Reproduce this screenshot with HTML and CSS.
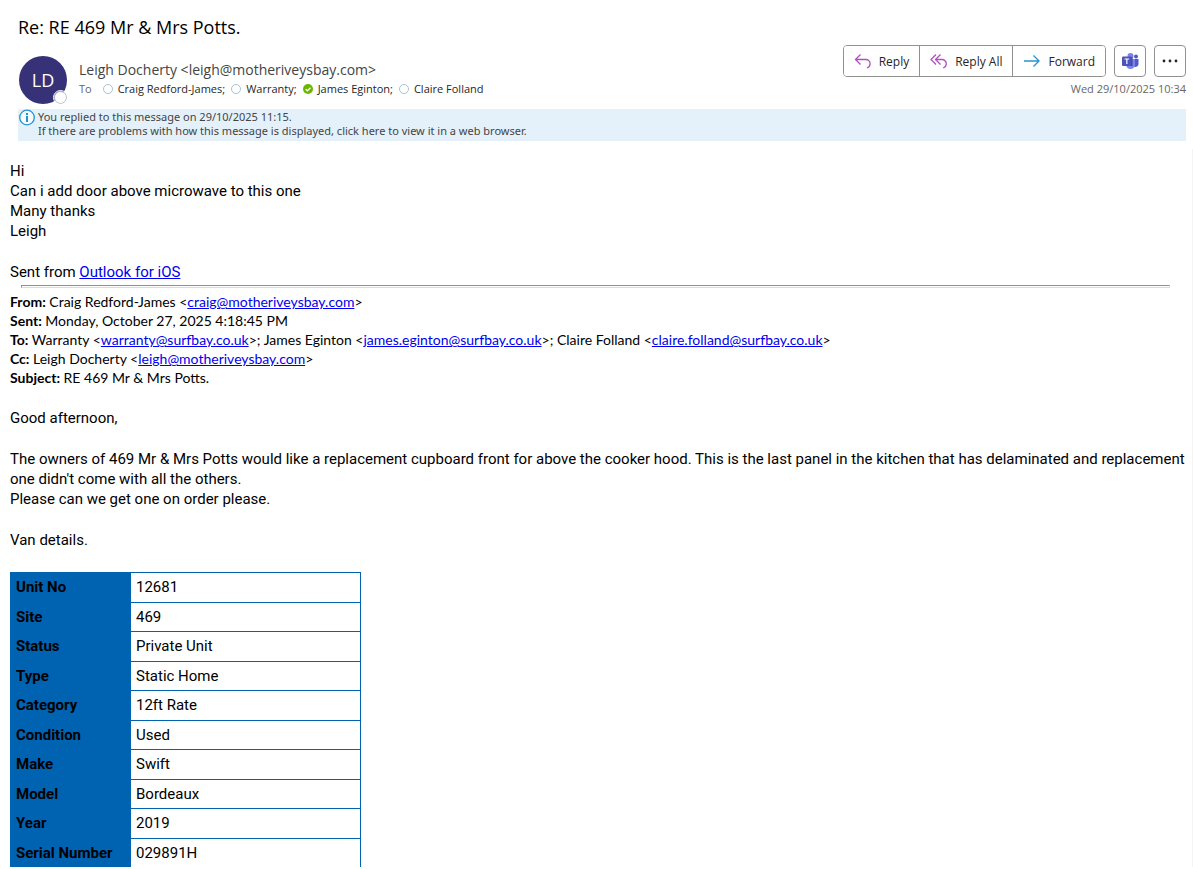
FILE: index.html
```html
<!DOCTYPE html>
<html lang="en">
<head>
<meta charset="utf-8">
<title>Re: RE 469 Mr &amp; Mrs Potts.</title>
<link rel="stylesheet" href="styles.css">
</head>
<body>
<header class="header">
  <h1 class="subject">Re: RE 469 Mr &amp; Mrs Potts.</h1>
  <div class="meta">
    <div class="avatar">LD<span class="presence"></span></div>
    <div class="people">
      <div class="sender">Leigh Docherty &lt;leigh@motheriveysbay.com&gt;</div>
      <div class="recipients">
        <span class="to">To</span>
        <span class="person"><i class="dot"></i>Craig Redford-James;</span>
        <span class="person"><i class="dot"></i>Warranty;</span>
        <span class="person"><svg class="check" viewBox="0 0 10 10"><circle cx="5" cy="5" r="5" fill="#6bb700"/><path d="M2.6 5.1 4.4 6.8 7.5 3.7" fill="none" stroke="#fff" stroke-width="1.3"/></svg>James Eginton;</span>
        <span class="person"><i class="dot"></i>Claire Folland</span>
      </div>
    </div>
    <div class="side">
      <div class="actions">
        <div class="group">
          <button class="action"><svg width="18" height="18" viewBox="0 0 18 18" fill="none" stroke="#b14fc0" stroke-width="1.3"><path d="M6.500 2.500 1.500 7.500l5 5M1.500 7.500h10.300a4.300 4.300 0 0 1 4.300 4.300c0 2-1 3.400-3.100 4.200"/></svg>Reply</button>
          <button class="action"><svg width="18" height="18" viewBox="0 0 18 18" fill="none" stroke="#b14fc0" stroke-width="1.3"><path d="M6 2.500 1 7.500l5 5M10.500 2.500l-5 5 5 5M5.500 7.500h6.500a4.300 4.300 0 0 1 4.300 4.300c0 2-1 3.400-3.100 4.200"/></svg>Reply All</button>
          <button class="action"><svg width="18" height="18" viewBox="0 0 18 18" fill="none" stroke="#2492d4" stroke-width="1.3"><path d="M1 9h15M10.500 3.500 16 9l-5.500 5.500"/></svg>Forward</button>
        </div>
        <button class="square" aria-label="Share to Teams"><svg width="18" height="18" viewBox="0 0 18 18"><circle cx="9.500" cy="4" r="3" fill="#7b83eb"/><circle cx="15" cy="4.500" r="2" fill="#5059c9"/><path d="M12 7h5.500v5a3 3 0 0 1-4.500 2.500z" fill="#5059c9"/><path d="M5 7h9v5.500a4.500 4.500 0 0 1-9 0z" fill="#7b83eb"/><path d="M6 5h5.500v9H6z" fill="#3b429e"/><rect x="1" y="4.500" width="9.500" height="9.500" rx="1" fill="#4b53bc"/><path d="M3.500 7h4.700M5.850 7v5" fill="none" stroke="#fff" stroke-width="1.200"/></svg></button>
        <button class="square" aria-label="More actions"><svg width="18" height="6" viewBox="0 0 18 6" fill="#262626"><circle cx="3" cy="3" r="1.400"/><circle cx="9" cy="3" r="1.400"/><circle cx="15" cy="3" r="1.400"/></svg></button>
      </div>
      <time class="date">Wed 29/10/2025 10:34</time>
    </div>
  </div>
  <div class="info">
    <svg width="18" height="18" viewBox="0 0 18 18"><circle cx="9" cy="8.500" r="7.300" fill="#f6fbfe" stroke="#2492d4" stroke-width="1.300"/><path d="M8 4h2v2H8zM8 7h2v6H8z" fill="#2492d4"/></svg>
    <div>You replied to this message on 29/10/2025 11:15.<br>If there are problems with how this message is displayed, click here to view it in a web browser.</div>
  </div>
</header>
<main class="message">
  <p>Hi<br>Can i add door above microwave to this one<br>Many thanks<br>Leigh</p>
  <p>Sent from <a href="#">Outlook for iOS</a></p>
  <hr class="rule">
  <div class="quoted">
    <b>From:</b> Craig Redford-James &lt;<a href="#">craig@motheriveysbay.com</a>&gt;<br>
    <b>Sent:</b> Monday, October 27, 2025 4:18:45 PM<br>
    <b>To:</b> Warranty &lt;<a href="#">warranty@surfbay.co.uk</a>&gt;; James Eginton &lt;<a href="#">james.eginton@surfbay.co.uk</a>&gt;; Claire Folland &lt;<a href="#">claire.folland@surfbay.co.uk</a>&gt;<br>
    <b>Cc:</b> Leigh Docherty &lt;<a href="#">leigh@motheriveysbay.com</a>&gt;<br>
    <b>Subject:</b> RE 469 Mr &amp; Mrs Potts.
  </div>
  <p>Good afternoon,</p>
  <p>The owners of 469 Mr &amp; Mrs Potts would like a replacement cupboard front for above the cooker hood. This is the last panel in the kitchen that has delaminated and replacement<br>one didn't come with all the others.<br>Please can we get one on order please.</p>
  <p>Van details.</p>
  <table class="details">
    <tr><th scope="row">Unit No</th><td>12681</td></tr>
    <tr><th scope="row">Site</th><td>469</td></tr>
    <tr><th scope="row">Status</th><td>Private Unit</td></tr>
    <tr><th scope="row">Type</th><td>Static Home</td></tr>
    <tr><th scope="row">Category</th><td>12ft Rate</td></tr>
    <tr><th scope="row">Condition</th><td>Used</td></tr>
    <tr><th scope="row">Make</th><td>Swift</td></tr>
    <tr><th scope="row">Model</th><td>Bordeaux</td></tr>
    <tr><th scope="row">Year</th><td>2019</td></tr>
    <tr><th scope="row">Serial Number</th><td>029891H</td></tr>
  </table>
</main>
</body>
</html>
```
FILE: styles.css
```css
* { box-sizing: border-box; }
body { margin: 0; background: #fff; color: #000; font-family: "Open Sans", sans-serif; }
.header { padding: 13px 7px 0 18px; }
.subject { margin: 0; font-size: 18px; line-height: 28px; font-weight: 400; }
.meta { display: flex; height: 68px; padding-top: 4px; }
.avatar { position: relative; width: 48px; height: 48px; margin: 11px 12px 0 1px; border-radius: 50%; background: #373277; color: #fff; font-size: 18px; line-height: 48px; text-align: center; }
.presence { position: absolute; right: 0; bottom: 0; width: 13px; height: 13px; border: 1px solid #a9bcc8; border-radius: 50%; background: #fff; outline: 1px solid #fff; }
.people { flex: 1; padding-top: 14px; white-space: nowrap; color: #444; }
.sender { font-size: 14px; line-height: 22px; }
.recipients { display: flex; gap: 6px; font-size: 11px; line-height: 16px; color: #262626; }
.to { margin-right: 5px; color: #666; }
.person { display: flex; align-items: center; gap: 5px; }
.dot { width: 10px; height: 10px; border: 1px solid #a9c4d2; border-radius: 50%; }
.check { width: 10px; height: 10px; }
.actions { display: flex; gap: 8px; }
.group { display: flex; overflow: hidden; border: 1px solid #919191; border-radius: 4px; }
button { margin: 0; background: #fff; color: #262626; font-family: inherit; font-size: 12px; cursor: pointer; }
.action { display: flex; align-items: center; gap: 7px; height: 30px; padding: 0 10px; border: 0; }
.action + .action { border-left: 1px solid #919191; }
.square { display: flex; align-items: center; justify-content: center; width: 32px; height: 32px; padding: 0; border: 1px solid #919191; border-radius: 4px; }
.date { display: block; margin-top: 4px; color: #666; font-size: 11px; line-height: 16px; text-align: right; }
.info { display: flex; gap: 2px; padding-bottom: 3px; background: #e4f1fa; color: #444; font: 11px/14px "Noto Sans", sans-serif; }
.info div { padding-top: 1px; }
.message { margin: 8px 0 0; padding: 12px 0 0 10px; box-shadow: inset -1px 0 #f4f4f4; font: 15px/20px Roboto, sans-serif; }
p { margin: 0 0 21px; }
a { color: #0000ee; }
.rule { height: 3px; margin: -18px 23px 4px 11px; border: 1px solid #dcdcdc; border-top-color: #919191; border-left-color: #919191; }
.quoted { margin-bottom: 21px; font: 14px/19px Lato, sans-serif; }
.details { width: 351px; height: 295px; margin-top: 22px; border-collapse: collapse; line-height: 20px; }
.details th, .details td { padding: 4px 5px; border: 1px solid #0063b1; text-align: left; }
.details th { width: 120px; background: #0063b1; white-space: nowrap; }
.details tr:last-child > * { border-bottom: 0; }
```
